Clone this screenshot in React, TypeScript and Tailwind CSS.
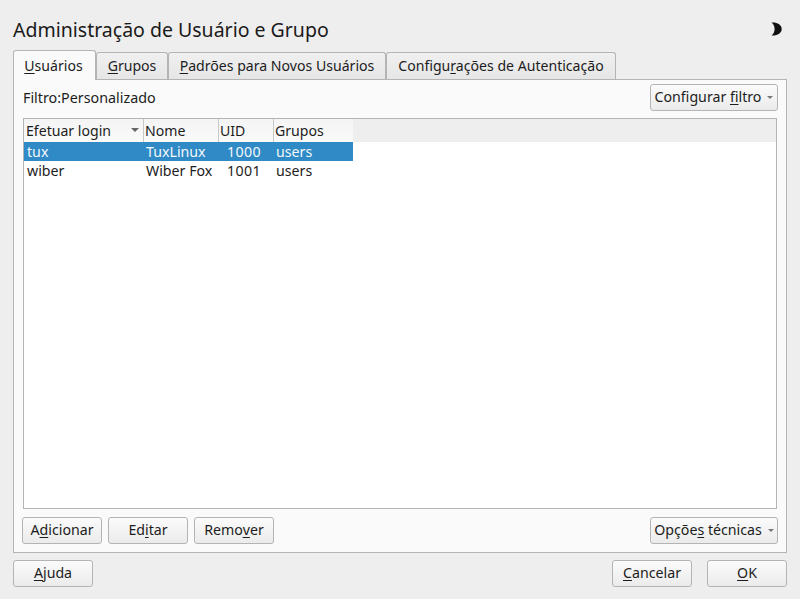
function M({ children }: { children: React.ReactNode }) {
  return <span className="underline decoration-1 underline-offset-[2px] [text-decoration-skip-ink:none]">{children}</span>;
}
function Btn({ w, children, caret }: { w: string; children: React.ReactNode; caret?: boolean }) {
  return (
    <button className={`${w} h-[27px] flex items-center justify-center gap-[6px] rounded-[3px] border border-[#b4b4b4] bg-gradient-to-b from-[#fbfbfb] to-[#ebebeb] pb-[2px] text-[14.2px] leading-[20px] text-[#1d1d1d]`}>
      <span>{children}</span>
      {caret && <span className="mt-[2px] h-0 w-0 border-x-[3px] border-t-[3px] border-x-transparent border-t-[#777]" />}
    </button>
  );
}
function Tab({ w, active, children }: { w: string; active?: boolean; children: React.ReactNode }) {
  return active ? (
    <div className={`${w} relative z-10 -mb-px h-[30px] flex items-center justify-center rounded-t-[3px] border border-b-0 border-[#b4b4b4] bg-[#fafafa] pr-[2px] text-[14.1px] text-[#1d1d1d]`}>{children}</div>
  ) : (
    <div className={`${w} mt-[2px] h-[27px] flex items-center justify-center rounded-t-[3px] border border-b-0 border-[#b4b4b4] bg-gradient-to-b from-[#f0f0f0] to-[#e6e6e6] text-[14.1px] text-[#1d1d1d]`}>{children}</div>
  );
}
function Row({ sel, cells }: { sel?: boolean; cells: string[] }) {
  return (
    <div className={`flex h-[19px] w-[329px] items-center text-[14.2px] ${sel ? "bg-[#2f8ac6] text-[#f4f8fb]" : "text-[#1d1d1d]"}`}>
      <div className="w-[119px] pl-[3px]">{cells[0]}</div>
      <div className="w-[75px] pl-[3px]">{cells[1]}</div>
      <div className="w-[55px] pl-[9px] tracking-[0.4px]">{cells[2]}</div>
      <div className="w-[80px] pl-[3px]">{cells[3]}</div>
    </div>
  );
}
export default function App() {
  return (
    <div className="flex h-[599px] w-[800px] flex-col overflow-hidden bg-[#eeeeee] px-[13px] font-['Noto_Sans',sans-serif] text-[#1d1d1d]">
      <div className="flex h-[50px] items-center justify-between pt-[9px]">
        <h1 className="text-[19.5px] leading-[28px] font-normal text-[#1a1a1a]">Administração de Usuário e Grupo</h1>
        <svg width="11" height="14" viewBox="0 0 11 14" className="mr-[5px] mt-[-2px]">
          <path d="M0.5 0.5 C6 0 10.7 2.6 10.7 7 C10.7 11.4 6 14 0.5 13.5 C3 11.5 3.6 9 3.6 7 C3.6 5 3 2.5 0.5 0.5 Z" fill="#111" />
        </svg>
      </div>
      <div className="flex h-[29px] items-start">
        <Tab w="w-[83px]" active><span><M>U</M>suários</span></Tab>
        <Tab w="w-[72px]"><span><M>G</M>rupos</span></Tab>
        <Tab w="w-[218px]"><span><M>P</M>adrões para Novos Usuários</span></Tab>
        <Tab w="w-[230px]"><span>Configu<M>r</M>ações de Autenticação</span></Tab>
      </div>
      <div className="flex h-[474px] w-[774px] flex-col border border-[#b4b4b4] bg-[#fafafa] pl-[8px] pr-[8px]">
        <div className="flex h-[38px] items-center justify-between pt-[4px] pb-[7px]">
          <span className="pl-[1px] text-[14.3px]">Filtro:Personalizado</span>
          <Btn w="w-[128px]" caret>Configurar <M>f</M>iltro</Btn>
        </div>
        <div className="ml-[1px] flex h-[391px] w-[754px] flex-col border border-[#b4b4b4] bg-white">
          <div className="flex h-[23px] shrink-0 bg-[#eeeeee] text-[14.1px]">
            <div className="relative flex w-[120px] items-center border-r border-[#c8c8c8] bg-gradient-to-b from-[#f4f4f4] to-[#fafafa] pl-[2px]">
              Efetuar login
              <span className="absolute right-[4px] top-[9px] h-0 w-0 border-x-[4px] border-t-[4px] border-x-transparent border-t-[#666]" />
            </div>
            <div className="flex w-[75px] items-center border-r border-[#c8c8c8] bg-gradient-to-b from-[#f4f4f4] to-[#fafafa] pl-[1px]">Nome</div>
            <div className="flex w-[55px] items-center border-r border-[#c8c8c8] bg-gradient-to-b from-[#f4f4f4] to-[#fafafa] pl-[1px]">UID</div>
            <div className="flex w-[79px] items-center bg-gradient-to-b from-[#f4f4f4] to-[#fafafa] pl-[1px]">Grupos</div>
          </div>
          <Row sel cells={["tux", "TuxLinux", "1000", "users"]} />
          <Row cells={["wiber", "Wiber Fox", "1001", "users"]} />
        </div>
        <div className="mt-[8px] flex justify-between">
          <div className="flex gap-[6px]">
            <Btn w="w-[80px]">A<M>d</M>icionar</Btn>
            <Btn w="w-[80px]">Ed<M>i</M>tar</Btn>
            <Btn w="w-[80px]">Remo<M>v</M>er</Btn>
          </div>
          <Btn w="w-[128px]" caret>Opçõe<M>s</M> técnicas</Btn>
        </div>
      </div>
      <div className="mt-[7px] flex justify-between">
        <Btn w="w-[80px]"><M>A</M>juda</Btn>
        <div className="flex gap-[15px]">
          <Btn w="w-[80px]"><M>C</M>ancelar</Btn>
          <Btn w="w-[80px]"><M>O</M>K</Btn>
        </div>
      </div>
    </div>
  );
}
